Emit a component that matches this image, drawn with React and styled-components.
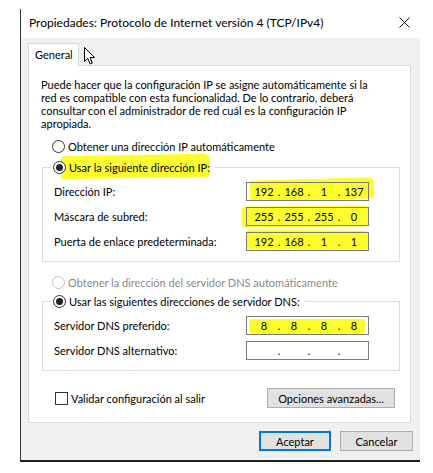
import styled, { createGlobalStyle, css } from 'styled-components';

const GlobalStyle = createGlobalStyle`
  body {
    margin: 0;
    background: #ffffff;
    font-family: "Lato", "Noto Sans", sans-serif;
    font-size: 11px;
    color: #000;
  }
`;

const ipRows = [
  { label: 'Dirección IP:', value: ['192', '168', '1', '137'], mark: 'a' },
  { label: 'Máscara de subred:', value: ['255', '255', '255', '0'], mark: 'b' },
  { label: 'Puerta de enlace predeterminada:', value: ['192', '168', '1', '1'], mark: 'c' },
];

const dnsRows = [
  { label: 'Servidor DNS preferido:', value: ['8', '8', '8', '8'], mark: 'd' },
  { label: 'Servidor DNS alternativo:', value: ['', '', '', ''] },
];

const Cursor = () => (
  <CursorMark width="12" height="18" viewBox="0 0 12 18">
    <path d="M0.5 0.5 L0.5 14.5 L3.8 11.4 L6.2 17 L8.3 16.1 L6 10.6 L10.6 10.6 Z"
      fill="#fff" stroke="#000" strokeWidth="1" strokeLinejoin="round" />
  </CursorMark>
);

const IpField = ({ value, mark }) => (
  <IpBox $mark={mark}>
    {value.map((v, i) => (
      <Octets key={i}>
        <Octet>{v}</Octet>
        {i < 3 && <Dot>.</Dot>}
      </Octets>
    ))}
  </IpBox>
);

const App = () => {
  return (
    <>
      <GlobalStyle />
      <Window>
        <TitleBar>
          <Title>Propiedades: Protocolo de Internet versión 4 (TCP/IPv4)</Title>
          <CloseIcon width="11" height="11" viewBox="0 0 11 11">
            <path d="M0.5 0.5 L10.5 10.5 M10.5 0.5 L0.5 10.5" stroke="#111" strokeWidth="1" />
          </CloseIcon>
        </TitleBar>
        <Body>
          <Tabs>
            <Tab>General</Tab>
          </Tabs>
          <Panel>
            <Intro>
              Puede hacer que la configuración IP se asigne automáticamente si la<br />
              red es compatible con esta funcionalidad. De lo contrario, deberá<br />
              consultar con el administrador de red cuál es la configuración IP<br />
              apropiada.
            </Intro>
            <RadioRow $top={10}>
              <Radio />
              <span>Obtener una dirección IP automáticamente</span>
            </RadioRow>
            <Group $top={8}>
              <Legend>
                <Radio $checked />
                <Marked>Usar la siguiente dirección IP:</Marked>
              </Legend>
              {ipRows.map((r) => (
                <FieldRow key={r.label}>
                  <span>{r.label}</span>
                  <IpField value={r.value} mark={r.mark} />
                </FieldRow>
              ))}
            </Group>
            <RadioRow $top={14} $disabled>
              <Radio $disabled />
              <span>Obtener la dirección del servidor DNS automáticamente</span>
            </RadioRow>
            <Group $top={6}>
              <Legend>
                <Radio $checked />
                <span>Usar las siguientes direcciones de servidor DNS:</span>
              </Legend>
              {dnsRows.map((r) => (
                <FieldRow key={r.label}>
                  <span>{r.label}</span>
                  <IpField value={r.value} mark={r.mark} />
                </FieldRow>
              ))}
            </Group>
            <OptionsRow>
              <CheckLabel>
                <CheckBox />
                <span>Validar configuración al salir</span>
              </CheckLabel>
              <Button $width={128}>Opciones avanzadas...</Button>
            </OptionsRow>
          </Panel>
          <Footer>
            <Button $width={72} $primary>Aceptar</Button>
            <Button $width={73}>Cancelar</Button>
          </Footer>
        </Body>
        <Cursor />
      </Window>
    </>
  );
};

const Window = styled.div`
  position: relative;
  margin: 9px 0 0 20px;
  width: 399px;
  border-left: 1px solid #3a3a3a;
  border-bottom: 2px solid #1e1e1e;
`;

const TitleBar = styled.div`
  height: 29px;
  display: flex;
  align-items: center;
  justify-content: space-between;
  padding: 0 10px 0 8px;
  background: #fff;
`;

const Title = styled.div`
  font-size: 12px;
  color: #000;
  margin-top: -2px;
`;

const CloseIcon = styled.svg`
  margin-top: -3px;
`;

const Body = styled.div`
  background: #f0f0f0;
  padding: 5px 9px 9px 7px;
`;

const Tabs = styled.div`
  display: flex;
  height: 22px;
`;

const Tab = styled.div`
  width: 51px;
  height: 23px;
  box-sizing: border-box;
  padding: 4px 0 0 6px;
  background: #fff;
  border: 1px solid #d9d9d9;
  border-bottom: none;
  position: relative;
  z-index: 1;
`;

const Panel = styled.div`
  isolation: isolate;
  background: #fff;
  border: 1px solid #d9d9d9;
  padding: 12px 10px 14px 12px;
  line-height: 13px;
`;

const Intro = styled.p`
  margin: 0;
  white-space: nowrap;
`;

const RadioRow = styled.div`
  display: flex;
  align-items: center;
  gap: 3px;
  margin: ${(p) => p.$top}px 0 0 11px;
  height: 13px;
  color: ${(p) => (p.$disabled ? '#8a8a8a' : '#000')};
`;

const Radio = styled.span`
  display: inline-block;
  box-sizing: border-box;
  width: 13px;
  height: 13px;
  border-radius: 50%;
  background: #fff;
  border: 1px solid ${(p) => (p.$disabled ? '#c4c4c4' : '#333')};
  position: relative;
  ${(p) =>
    p.$checked &&
    css`
      &::after {
        content: '';
        position: absolute;
        inset: 2px;
        border-radius: 50%;
        background: #222;
      }
    `}
`;

const Group = styled.fieldset`
  margin: ${(p) => p.$top}px 0 0 1px;
  padding: 0 0 10px 0;
  border: 1px solid #dcdcdc;
  display: flex;
  flex-direction: column;
  gap: 6px;
`;

const Legend = styled.legend`
  display: flex;
  align-items: center;
  gap: 3px;
  margin-left: 8px;
  padding: 0 5px 0 2px;
  height: 13px;
  margin-bottom: 8px;
`;

const Marked = styled.span`
  position: relative;
  &::before {
    content: '';
    position: absolute;
    left: -8px;
    right: 0;
    top: -6px;
    bottom: -4px;
    background: #fdfd2e;
    border-radius: 3px 6px 3px 2px;
    transform: rotate(-1deg);
    z-index: -1;
  }
`;

const FieldRow = styled.div`
  display: flex;
  align-items: center;
  justify-content: space-between;
  padding: 0 30px 0 11px;
`;

const marks = {
  a: css`left: 3px; right: -6px; top: -4px; bottom: 0; transform: rotate(-1.5deg);`,
  b: css`left: -5px; right: 0; top: -2px; bottom: -2px; transform: rotate(-0.5deg);`,
  c: css`left: 0; right: 0; top: -3px; bottom: 0; transform: rotate(0.8deg);`,
  d: css`left: 2px; right: 3px; top: 2px; bottom: 0; transform: rotate(-0.3deg);`,
};

const IpBox = styled.div`
  position: relative;
  box-sizing: border-box;
  width: 123px;
  height: 19px;
  border: 1px solid #7a7a7a;
  display: flex;
  align-items: center;
  padding-left: 6px;
  background: ${(p) => (p.$mark ? 'transparent' : '#fff')};
  ${(p) =>
    p.$mark &&
    css`
      &::before {
        content: '';
        position: absolute;
        background: #fdfd2e;
        border-radius: 4px;
        z-index: -1;
        ${marks[p.$mark]}
      }
    `}
`;

const Octets = styled.span`
  display: flex;
`;

const Octet = styled.span`
  width: 22px;
  text-align: center;
`;

const Dot = styled.span`
  width: 8px;
  text-align: center;
`;

const OptionsRow = styled.div`
  display: flex;
  align-items: center;
  justify-content: space-between;
  margin-top: 17px;
  padding: 0 5px 0 14px;
`;

const CheckLabel = styled.div`
  display: flex;
  align-items: center;
  gap: 3px;
`;

const CheckBox = styled.span`
  display: inline-block;
  box-sizing: border-box;
  width: 13px;
  height: 13px;
  border: 1px solid #333;
  background: #fff;
`;

const Button = styled.div`
  box-sizing: border-box;
  width: ${(p) => p.$width}px;
  height: 20px;
  display: flex;
  align-items: center;
  justify-content: center;
  background: #e1e1e1;
  border: ${(p) => (p.$primary ? '2px solid #0078d7' : '1px solid #adadad')};
`;

const Footer = styled.div`
  display: flex;
  justify-content: flex-end;
  gap: 9px;
  margin-top: 8px;
  margin-right: -2px;
`;

const CursorMark = styled.svg`
  position: absolute;
  left: 63px;
  top: 38px;
`;

export default App;
